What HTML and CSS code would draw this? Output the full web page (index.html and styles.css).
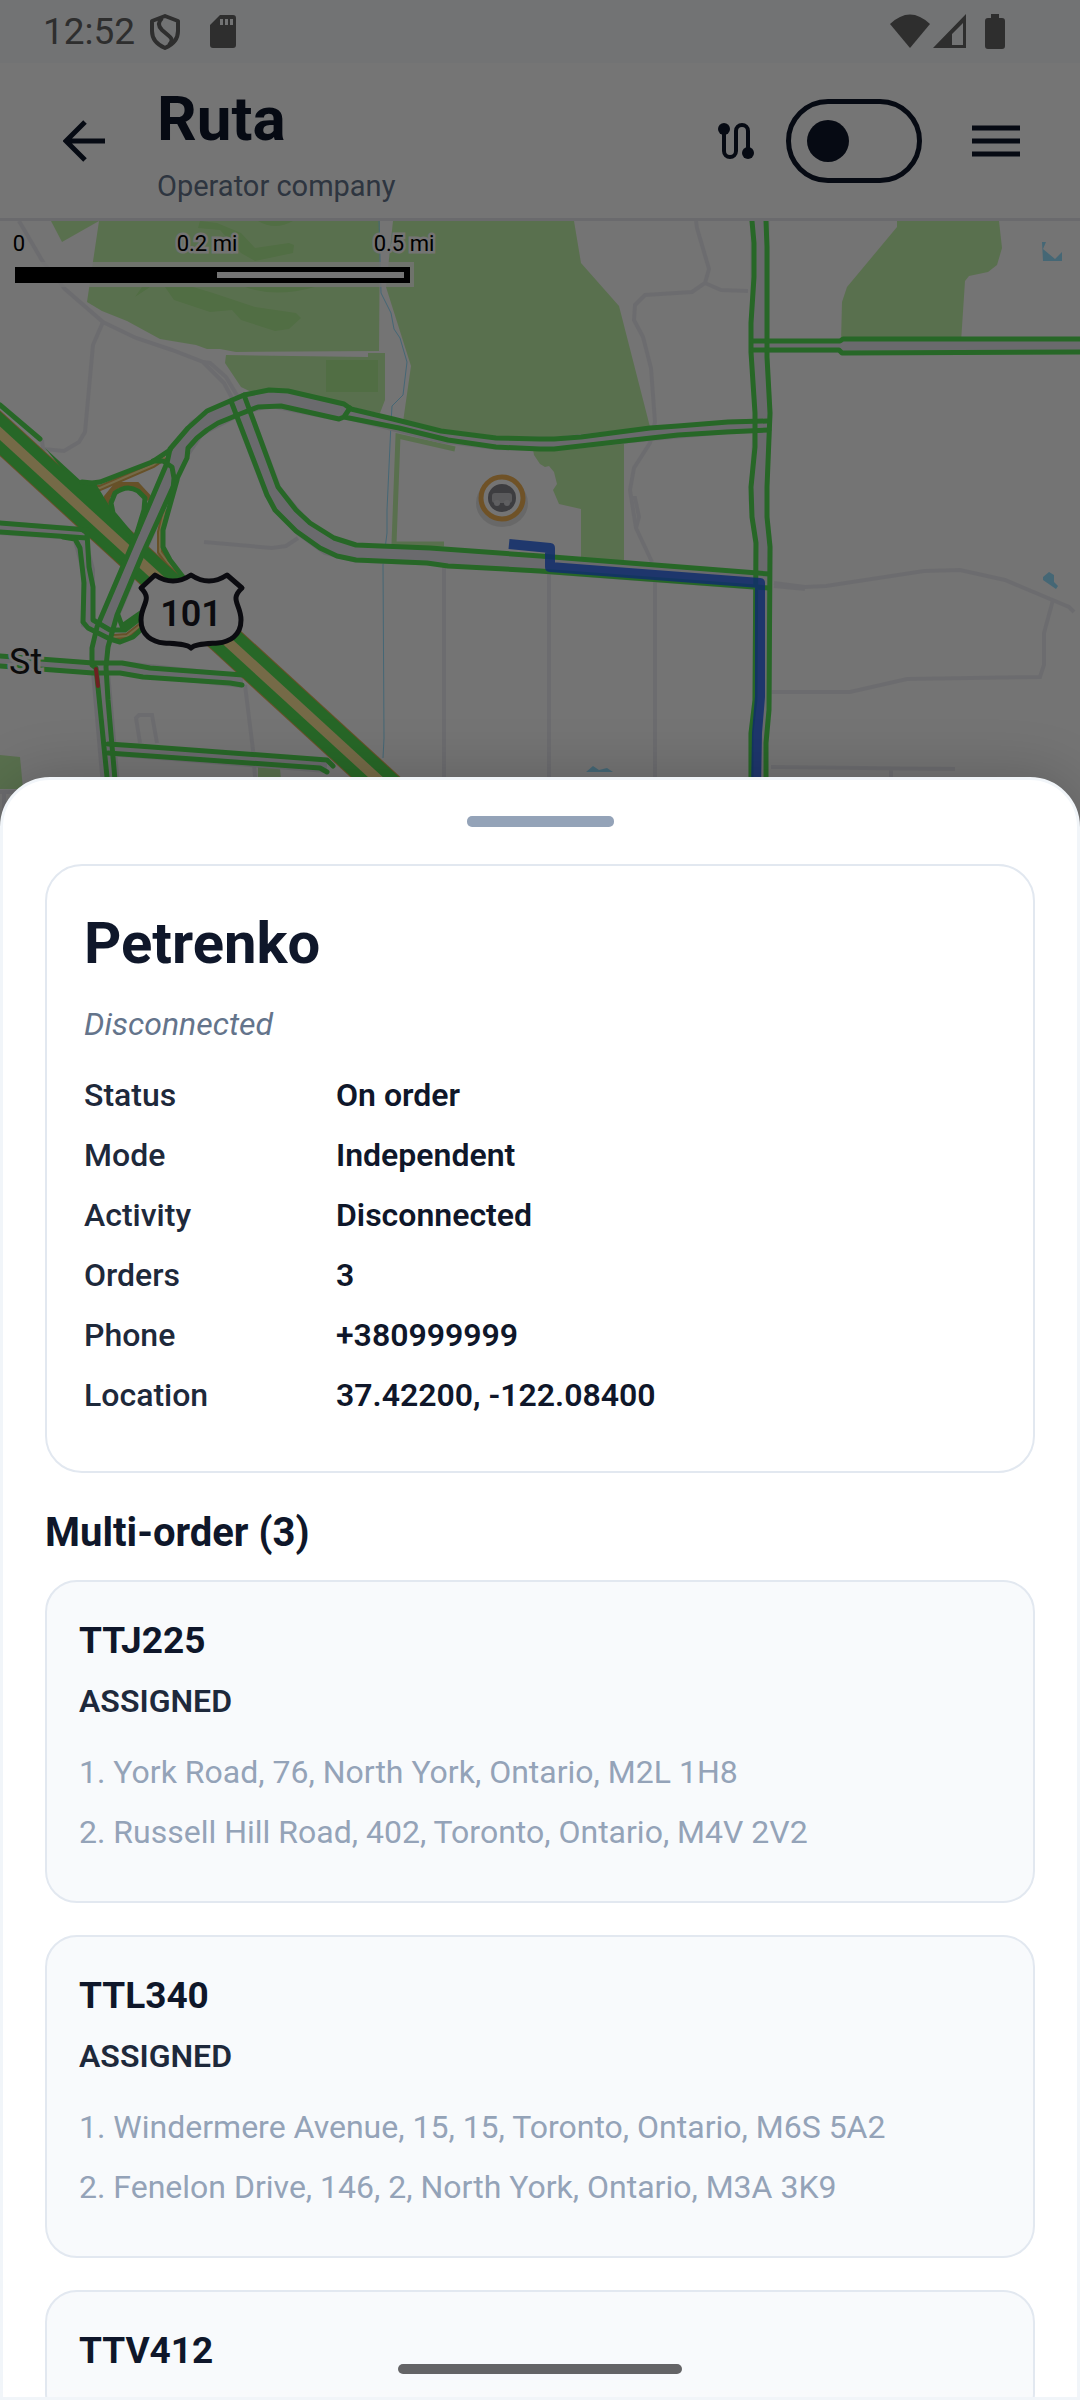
FILE: index.html
```html
<!DOCTYPE html>
<html lang="en">
<head>
  <meta charset="UTF-8">
  <meta name="viewport" content="width=device-width, initial-scale=1">
  <title>Ruta - Operator company</title>
  <link rel="stylesheet" href="styles.css">
</head>
<body>
  <div class="screen">

    <div class="status-bar">
      <span class="clock">12:52</span>
      <svg class="status-shield" width="30" height="36" viewBox="0 0 30 36" fill="none" stroke="currentColor" stroke-width="4">
        <path d="M15 2 L28 7 V17 C28 26 22 31 15 34 C8 31 2 26 2 17 V7 Z" stroke-linejoin="round"/>
        <path d="M12 4 C8 8 8 12 12 16 L19 22 C23 25 22 28 19 31"/>
      </svg>
      <svg class="status-sd" width="26" height="33" viewBox="0 0 26 33">
        <path fill="currentColor" fill-rule="evenodd" d="M10 0 H23 Q26 0 26 3 V30 Q26 33 23 33 H3 Q0 33 0 30 V10 Z M10 4 V10 H13 V4 Z M15 4 V10 H18 V4 Z M20 4 V10 H23 V4 Z"/>
      </svg>
      <svg class="status-right" width="116" height="35" viewBox="0 0 116 35" fill="currentColor">
        <path d="M0 10 Q20 -9 40 10 L20 34 Z"/>
        <path fill-rule="evenodd" d="M76 0 V34 H43 Z M73 9 L62 20 V31 H73 Z"/>
        <path d="M101 0 H109 V4 H112 Q115 4 115 7 V32 Q115 35 112 35 H98 Q95 35 95 32 V7 Q95 4 98 4 H101 Z"/>
      </svg>
    </div>

    <header class="app-bar">
      <button class="icon-btn back-btn" aria-label="Back">
        <svg width="42" height="42" viewBox="0 0 42 42" fill="none" stroke="currentColor" stroke-width="5">
          <path d="M42 21 H4 M22 2 L3 21 L22 40"/>
        </svg>
      </button>
      <div class="titles">
        <h1>Ruta</h1>
        <p>Operator company</p>
      </div>
      <svg class="route-icon" width="36" height="36" viewBox="0 0 36 36">
        <path d="M6 6 V28 A6 6 0 0 0 18 28 V8 A6 6 0 0 1 30 8 V30" fill="none" stroke="currentColor" stroke-width="4"/>
        <circle cx="6" cy="6" r="6" fill="currentColor"/>
        <circle cx="30" cy="30" r="6" fill="currentColor"/>
      </svg>
      <input type="checkbox" class="switch" aria-label="Show routes">
      <button class="icon-btn menu-btn" aria-label="Menu">
        <svg width="48" height="32" viewBox="0 0 48 32" stroke="currentColor" stroke-width="5">
          <path d="M0 3 H48 M0 16 H48 M0 29 H48"/>
        </svg>
      </button>
    </header>

    <div class="map">
      <svg viewBox="0 221 1080 640" preserveAspectRatio="xMidYMin slice">
        <!-- parks -->
        <g fill="#c3f3aa">
          <path d="M51 221 H99 L62 242 Z"/>
          <path d="M99 221 L87 302 L102 311 L127 321 L160 339 L196 345 L207 349 L220 349 L236 352 L379 351 L380 221 Z"/>
          <path d="M226 355 L368 357 V353 H385 V400 L380 413 L268 400 L241 387 L225 363 Z"/>
          <path d="M393 221 L386 287 L411 366 L403 422 L496 443 L532 444 L534 455 L540 464 L545 467 L549 466 L554 472 L557 484 L553 490 L559 504 L581 509 V560 H624 V443 L650 427 L619 306 L581 263 L574 221 Z"/>
          <path d="M897 221 V227 L847 287 L842 302 L841 342 H961 L965 281 L969 276 L988 272 L997 265 L1002 248 L999 221 Z"/>
          <path d="M0 755 L20 757 L23 789 H0 Z"/>
          <path d="M258 767 L280 768 L281 780 H258 Z"/>
        </g>
        <path d="M444 544 H394 L398 436 L455 449" fill="none" stroke="#c3f3aa" stroke-width="5"/>
        <g fill="#b0ef94">
          <path d="M200 221 L198 228 L220 230 L241 253 L255 261 L293 253 L294 245 L289 243 L255 248 L241 233 L217 223 Z"/>
          <path d="M165 287 L174 300 L210 312 L232 310 L241 320 L275 331 L289 329 L301 318 L296 313 L255 307 L213 293 L193 287 Z"/>
          <path d="M245 287 Q275 298 315 287 Z"/>
          <path d="M258 221 Q275 231 293 221 Z"/>
          <path d="M135 297 L142 287 H150 Z"/>
          <path d="M326 360 H378 V392 H326 Z"/>
        </g>

        <!-- water -->
        <path class="stream" d="M379 221 L381 293 L391 313 L394 329 L400 338 L407 362 L403 395 L392 406 L391 423 L387 510 V533 L383 565 L384 738 L383 758"/>
        <g fill="#96e0ff">
          <path d="M1042 242 H1046 L1043 249 L1055 259 L1062 252 V261 H1043 Z"/>
          <path d="M1043 577 L1049 572 L1054 575 V582 L1058 586 L1056 589 L1043 580 Z"/>
          <path d="M586 772 L593 766 L599 770 L607 768 L613 772 Z"/>
        </g>

        <!-- minor roads -->
        <g class="minor">
          <path d="M19 221 L43 262 L65 289 L103 322 L136 338 L172 350 L203 362 L224 383 L232 398"/>
          <path d="M203 362 L210 363 L226 377 L238 397"/>
          <path d="M103 322 L93 345 L85 432 L79 442 L64 451 L43 449 L42 440"/>
          <path d="M696 221 L697 228 L709 269 L705 283 L692 292 L645 295 L635 305 L634 320 L643 337 L651 368 L655 422 L650 443 L634 468 L630 490 L636 528 L652 562"/>
          <path d="M705 283 L721 290 L748 291"/>
          <path d="M632 498 H635 L639 517 L636 528"/>
          <path d="M774 583 L805 587 L826 586 L924 571 L960 570 L1005 580 L1069 607 L1074 612"/>
          <path d="M774 586 L805 589"/>
          <path d="M1053 600 L1044 633 V665 L1040 677 L907 679 L850 692 L771 692"/>
          <path d="M771 767 L955 769 M891 769 V790"/>
          <path d="M655 580 V790 M549 570 V790 M444 565 V790"/>
          <path d="M204 542 L272 548 L286 546 L298 538"/>
          <path d="M245 685 L253 750 L256 790 M140 743 L136 718 L139 715 H152 L157 743"/>
          <path d="M0 792 H20 M4 792 V815"/>
        </g>

        <!-- road beds -->
        <g class="bed">
          <path d="M760 221 V330 L759 350 L763 415 L758 500 L763 545 L762 700 L758 735 V790"/>
          <path d="M110 780 L99 655 L107 622 L178 456 L197 428 L240 406 L269 398 L340 412"/>
          <path d="M238 400 L273 492 L303 528 L328 546 L356 553 L430 556 L765 581"/>
          <path class="narrow" d="M340 411 L441 436 L496 443 L554 444 L650 434 L728 427 L768 425"/>
          <path class="narrow" d="M752 346 H840 L1080 346"/>
          <path class="narrow" d="M0 528 L88 534 M80 540 L88 570 V622 L112 634"/>
          <path class="narrow" d="M0 661 L93 668 L122 668 L243 681 M108 749 L327 766"/>
        </g>

        <!-- highway 101 and its ramps -->
        <g class="ramp-edge">
          <path d="M80 488 L100 488 L153 465 L165 457"/>
          <path d="M107 510 L107 497 L117 485 L137 485 L150 499"/>
          <path d="M165 510 L160 532 V552 L178 576"/>
          <path d="M113 637 L127 636 L145 622"/>
        </g>
        <g class="ramp">
          <path d="M80 488 L100 488 L153 465 L165 457"/>
          <path d="M165 510 L160 532 V552 L178 576"/>
          <path d="M113 637 L127 636 L145 622"/>
        </g>
        <path d="M-20 415 L395 795" stroke="#e0b058" stroke-width="34"/>
        <path d="M-20 415 L395 795" stroke="#55e055" stroke-width="32"/>
        <path d="M45 448 L82 482 L96 484 L130 540 L95 510 Z M75 528 L100 544 L125 565 L90 535 Z" fill="#55e055"/>
        <path d="M-20 415 L395 795" stroke="#ffe69c" stroke-width="10"/>
        <path d="M107 622 L178 456" stroke="#e8e8ee" stroke-width="12"/>

        <!-- traffic -->
        <g class="traffic">
          <path d="M0 405 L40 439"/>
          <path d="M107 777 L98 687 L96 668 L92 665 V648 L97 627 L167 463 L170 449 L188 428 L207 411 L230 401 L244 395 L269 390 L288 391 L344 404 L351 409 L393 419 L441 431 L496 438 L540 439 L554 439 L581 437 L650 428 L678 426 L728 422 L767 421"/>
          <path d="M115 780 L108 700 L106 667 L108 647 L117 615 L143 553 L173 487 L187 458 L188 448 L197 438 L207 430 L218 423 L240 414 L258 407 L281 406 L339 419 L344 417 L399 428 L448 440 L496 447 L540 449 L554 449 L624 441 L678 435 L726 432 L769 430 M344 417 L350 408"/>
          <path d="M231 401 L267 495 L275 510 L296 531 L320 548 L337 556 L356 560 L427 563 L448 566 L540 571 L769 588"/>
          <path d="M244 395 L278 487 L296 510 L310 523 L334 538 L356 545 L430 548 L540 556 L769 574"/>
          <path d="M752 221 L754 243 V277 L751 323 V352 L755 413 V447 L751 487 L752 517 L756 543 L755 700 L751 733 V790"/>
          <path d="M766 221 L767 247 V357 L770 413 L767 487 V517 L770 547 L769 710 L766 743 V790"/>
          <path d="M752 341 H840 L843 339 H1090 M752 350 H839 L842 353 L1090 352"/>
          <path d="M82 482 L92 483 L100 482 L152 462 L170 450"/>
          <path d="M153 461 H163 L172 467 L174 478 L173 490"/>
          <path d="M133 537 L113 513 L111 503 L115 493 Q127 484 138 491 L145 498 L144 510 L137 533"/>
          <path d="M177 480 L163 530 V547 L170 560 L183 577"/>
          <path d="M0 523 L88 530 M0 532 L87 538"/>
          <path d="M63 537 L75 539 L80 548 L84 583 L83 622 L88 628 L110 639 L120 642 L133 637 L145 626"/>
          <path d="M87 533 L89 567 L93 587 V620 L110 630 H125 L142 617 M118 615 L122 626 L142 612"/>
          <path d="M0 656 L93 663 H122 L150 668 L243 675 M0 666 L93 673 H120 L143 677 L230 683 L242 685"/>
          <path d="M108 744 L138 746 L327 760 L333 766 M108 753 L320 768 L327 772"/>
        </g>
        <path d="M96 669 L98 686" stroke="#f04848" stroke-width="4" stroke-linecap="round"/>

        <!-- active route -->
        <path d="M509 544 L550 548 V567 L760 583 V697 L757 733 L756 790" fill="none" stroke="#2563eb" stroke-width="10" stroke-linejoin="round" opacity=".85"/>

        <path d="M141 588 L155 575 Q173 587 191 575 Q209 587 227 575 L242 588 C229 600 241 604 241 620 C241 636 229 642 218 643 C204 644 195 644 191 648 C187 644 178 644 164 643 C153 642 141 636 141 620 C141 604 153 600 141 588 Z" fill="#fcfcfc" stroke="#1a1a24" stroke-width="5" stroke-linejoin="round"/>
        <text class="shield-label" x="191" y="626">101</text>
        <text class="street" x="9" y="674">St</text>

        <!-- driver marker -->
        <ellipse cx="502" cy="503" rx="26" ry="24" fill="#000000" opacity=".1"/>
        <circle cx="502" cy="498" r="21" fill="#fcfcfc" stroke="#f2b455" stroke-width="5"/>
        <circle cx="502" cy="498" r="14" fill="#85858c"/>
        <rect x="492" y="493" width="20" height="10" rx="3" fill="#c4c4c8"/>
        <circle cx="497" cy="503" r="3" fill="#d0d0d4"/>
        <circle cx="507" cy="503" r="3" fill="#d0d0d4"/>

        <!-- scale bar -->
        <rect x="10" y="262" width="404" height="25" fill="#fcfcfc" opacity=".8"/>
        <rect x="15" y="267" width="395" height="16" fill="#000000"/>
        <rect x="217" y="272" width="187" height="6" fill="#fcfcfc"/>
        <g class="scale-label">
          <text x="19" y="251">0</text>
          <text x="207" y="251">0.2 mi</text>
          <text x="404" y="251">0.5 mi</text>
        </g>
      </svg>
    </div>

    <div class="scrim"></div>

    <section class="sheet">
      <div class="handle"></div>

      <div class="driver-card">
        <h2>Petrenko</h2>
        <p class="connection">Disconnected</p>
        <dl>
          <dt>Status</dt>
          <dd>On order</dd>
          <dt>Mode</dt>
          <dd>Independent</dd>
          <dt>Activity</dt>
          <dd>Disconnected</dd>
          <dt>Orders</dt>
          <dd>3</dd>
          <dt>Phone</dt>
          <dd>+380999999</dd>
          <dt>Location</dt>
          <dd>37.42200, -122.08400</dd>
        </dl>
      </div>

      <h3 class="section-title">Multi-order (3)</h3>

      <div class="orders">
        <div class="order-card">
          <h4>TTJ225</h4>
          <p class="order-status">ASSIGNED</p>
          <p class="stop">1. York Road, 76, North York, Ontario, M2L 1H8</p>
          <p class="stop">2. Russell Hill Road, 402, Toronto, Ontario, M4V 2V2</p>
        </div>
        <div class="order-card">
          <h4>TTL340</h4>
          <p class="order-status">ASSIGNED</p>
          <p class="stop">1. Windermere Avenue, 15, 15, Toronto, Ontario, M6S 5A2</p>
          <p class="stop">2. Fenelon Drive, 146, 2, North York, Ontario, M3A 3K9</p>
        </div>
        <div class="order-card">
          <h4>TTV412</h4>
        </div>
      </div>
    </section>

    <div class="home-bar"></div>
  </div>
</body>
</html>
```
FILE: styles.css
```css
* {
  box-sizing: border-box;
}

body {
  margin: 0;
  font-family: Roboto, "Noto Sans", sans-serif;
  background: #ffffff;
  color: #0f172a;
}

h1, h2, h3, h4, p, dl, dd {
  margin: 0;
}

.screen {
  position: relative;
  display: flex;
  flex-direction: column;
  height: 100vh;
  overflow: hidden;
}

/* status bar */
.status-bar {
  display: flex;
  align-items: center;
  flex-shrink: 0;
  height: 63px;
  padding: 0 74px 0 43px;
  background: #f8fafc;
  color: #646464;
}

.clock {
  font-size: 37px;
}

.status-shield {
  margin-left: 15px;
}

.status-sd {
  margin-left: 30px;
}

.status-right {
  margin-left: auto;
}

/* app bar */
.app-bar {
  display: flex;
  align-items: center;
  flex-shrink: 0;
  height: 158px;
  padding: 0 40px 0 43px;
  background: #ffffff;
  border-bottom: 3px solid #e8e8ee;
}

.icon-btn {
  display: flex;
  padding: 20px;
  border: none;
  background: none;
  color: #0f172a;
  cursor: pointer;
}

.titles {
  flex: 1;
  padding-top: 7px;
  padding-left: 32px;
}

.titles h1 {
  font-size: 62px;
  line-height: 84px;
}

.titles p {
  font-size: 29px;
  line-height: 50px;
  color: #64748b;
}

.route-icon {
  margin-right: 32px;
}

.switch {
  display: flex;
  align-items: center;
  width: 136px;
  height: 84px;
  margin: 0 30px 0 0;
  padding-left: 16px;
  appearance: none;
  border: 5px solid #0f172a;
  border-radius: 42px;
  cursor: pointer;
}

.switch::before {
  content: "";
  width: 42px;
  height: 42px;
  border-radius: 50%;
  background: #0f172a;
}

/* map */
.map {
  flex-shrink: 0;
  height: 640px;
  background: #fcfcfc;
}

.map svg {
  display: block;
  width: 100%;
  height: 100%;
}

.stream {
  fill: none;
  stroke: #96e0ff;
  stroke-width: 1;
}

.minor path {
  fill: none;
  stroke: #ececf1;
  stroke-width: 4;
}

.bed path {
  fill: none;
  stroke: #e8e8ee;
  stroke-width: 19;
}

.bed .narrow {
  stroke-width: 14;
}

.ramp-edge path {
  fill: none;
  stroke: #e0b058;
  stroke-width: 6;
}

.ramp path {
  fill: none;
  stroke: #ffe69c;
  stroke-width: 2;
}

.traffic path {
  fill: none;
  stroke: #55e055;
  stroke-width: 5;
  stroke-linejoin: round;
  stroke-linecap: round;
}

.shield-label {
  font-size: 36px;
  font-weight: 600;
  fill: #1a1a24;
  text-anchor: middle;
}

.street {
  font-size: 36px;
  fill: #1a1a1a;
  stroke: #fcfcfc;
  stroke-width: 6;
  paint-order: stroke;
}

.scale-label text {
  font-size: 22px;
  text-anchor: middle;
  stroke: #fcfcfc;
  stroke-width: 5;
  paint-order: stroke;
}

.scrim {
  position: absolute;
  inset: 0;
  background: rgba(0, 0, 0, 0.54);
}

/* bottom sheet */
.sheet {
  position: relative;
  flex: 1;
  min-height: 0;
  margin-top: -84px;
  padding: 36px 42px 0;
  overflow: hidden;
  background: #ffffff;
  border: 3px solid #f1f5f9;
  border-radius: 50px 50px 0 0;
  box-shadow: 0 0 60px rgba(0, 0, 0, 0.2);
}

.handle {
  width: 147px;
  height: 11px;
  margin: 0 auto 37px;
  border-radius: 5px;
  background: #94a3b8;
}

.driver-card {
  padding: 35px 37px 55px;
  border: 2px solid #e2e8f0;
  border-radius: 37px;
}

.driver-card h2 {
  font-size: 58px;
  line-height: 84px;
}

.connection {
  margin-top: 18px;
  font-size: 32px;
  line-height: 42px;
  font-style: italic;
  color: #64748b;
}

.driver-card dl {
  display: grid;
  grid-template-columns: 252px 1fr;
  row-gap: 18px;
  margin-top: 29px;
  font-size: 32px;
  line-height: 42px;
}

.driver-card dt {
  font-weight: 500;
  color: #1e293b;
}

.driver-card dd {
  font-weight: 600;
}

.section-title {
  margin: 34px 0 21px;
  font-size: 40px;
  line-height: 52px;
}

.orders {
  display: flex;
  flex-direction: column;
  gap: 32px;
}

.order-card {
  padding: 35px 32px 48px;
  background: #f8fafc;
  border: 2px solid #e2e8f0;
  border-radius: 32px;
}

.order-card h4 {
  font-size: 37px;
  line-height: 48px;
}

.order-status {
  margin: 15px 0 29px;
  font-size: 32px;
  line-height: 42px;
  font-weight: 600;
  color: #1e293b;
}

.stop {
  font-size: 32px;
  line-height: 42px;
  color: #94a3b8;
}

.stop + .stop {
  margin-top: 18px;
}

.home-bar {
  position: absolute;
  bottom: 26px;
  left: 0;
  right: 0;
  width: 284px;
  height: 10px;
  margin: 0 auto;
  border-radius: 5px;
  background: #646466;
}
```
